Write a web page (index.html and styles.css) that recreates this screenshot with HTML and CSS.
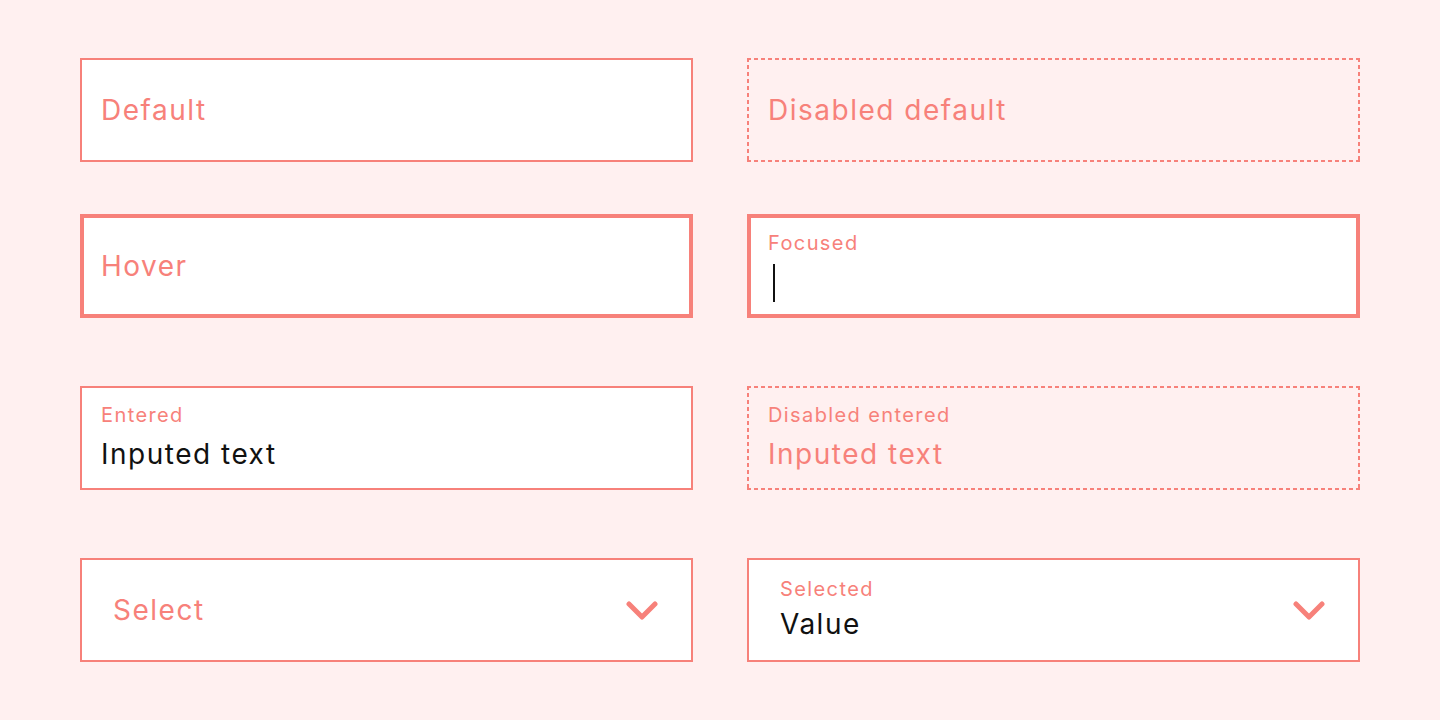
FILE: index.html
```html
<!DOCTYPE html>
<html lang="en">
<head>
    <meta charset="UTF-8">
    <meta name="viewport" content="width=device-width, initial-scale=1.0">
    <title>Input states</title>
    <link rel="stylesheet" href="styles.css">
</head>
<body>

    <div class="fields">
        <div class="field">
            <span class="placeholder">Default</span>
        </div>
        <div class="field disabled">
            <span class="placeholder">Disabled default</span>
        </div>

        <div class="field hover row-2">
            <span class="placeholder">Hover</span>
        </div>
        <div class="field focused row-2">
            <span class="label">Focused</span>
            <span class="caret"></span>
        </div>

        <div class="field filled row-3">
            <span class="label">Entered</span>
            <span class="value">Inputed text</span>
        </div>
        <div class="field filled disabled row-3">
            <span class="label">Disabled entered</span>
            <span class="value">Inputed text</span>
        </div>

        <div class="field select row-4">
            <span class="placeholder">Select</span>
            <svg class="chevron" width="32" height="20" viewBox="0 0 32 20">
                <path d="M3 3 L16 16 L29 3" fill="none" stroke="#f7817a" stroke-width="5" stroke-linecap="round" stroke-linejoin="round"/>
            </svg>
        </div>
        <div class="field select filled row-4">
            <div class="stack">
                <span class="label">Selected</span>
                <span class="value">Value</span>
            </div>
            <svg class="chevron" width="32" height="20" viewBox="0 0 32 20">
                <path d="M3 3 L16 16 L29 3" fill="none" stroke="#f7817a" stroke-width="5" stroke-linecap="round" stroke-linejoin="round"/>
            </svg>
        </div>
    </div>

</body>
</html>
```

FILE: styles.css
```css
body {
    margin: 0;
    background-color: #fff0f0;
    font-family: 'Inter', 'Open Sans', sans-serif;
    color: #f7817a;
}
.fields {
    display: grid;
    grid-template-columns: 613px 613px;
    column-gap: 54px;
    padding: 58px 0 0 80px;
}
.field {
    box-sizing: border-box;
    height: 104px;
    display: flex;
    flex-direction: column;
    justify-content: center;
    padding: 0 19px;
    background-color: #fff;
    border: 2px solid #f7817a;
}
.row-2 {
    margin-top: 52px;
}
.row-3, .row-4 {
    margin-top: 68px;
}
.placeholder {
    font-size: 28px;
    letter-spacing: 1.5px;
}
/* dashed border drawn by hand: short 4px dashes */
.disabled {
    border: none;
    padding: 0 21px;
    background-color: transparent;
    background-image:
        repeating-linear-gradient(90deg, #f7817a 0 4px, transparent 4px 7px),
        repeating-linear-gradient(90deg, #f7817a 0 4px, transparent 4px 7px),
        repeating-linear-gradient(180deg, #f7817a 0 4px, transparent 4px 7px),
        repeating-linear-gradient(180deg, #f7817a 0 4px, transparent 4px 7px);
    background-size: 100% 2px, 100% 2px, 2px 100%, 2px 100%;
    background-position: top left, bottom left, top left, top right;
    background-repeat: no-repeat;
}
.hover, .focused {
    border-width: 4px;
    padding: 0 17px;
}
.label {
    font-size: 20px;
    line-height: 24px;
    letter-spacing: 1.4px;
}
.value {
    font-size: 28px;
    line-height: 38px;
    letter-spacing: 1.5px;
    color: #111;
    margin-top: 8px;
}
.disabled .value {
    color: #f7817a;
}
.focused {
    justify-content: flex-start;
    padding-top: 13px;
}
.caret {
    width: 2px;
    height: 38px;
    margin: 9px 0 0 5px;
    background-color: #111;
}
.select {
    flex-direction: row;
    align-items: center;
    justify-content: space-between;
    padding: 0 33px 0 31px;
}
.select.filled .value {
    margin-top: 4px;
}
.stack {
    display: flex;
    flex-direction: column;
}
.chevron {
    margin-top: 2px;
}
```
